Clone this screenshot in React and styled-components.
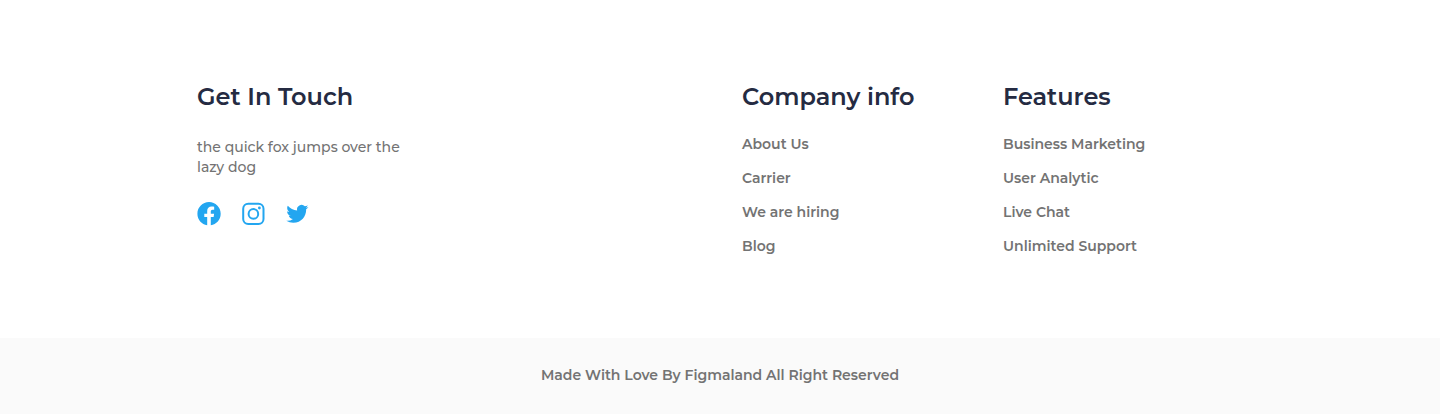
import React from "react";
import styled, { createGlobalStyle } from "styled-components";

const GlobalStyle = createGlobalStyle`
  *, *::before, *::after { box-sizing: border-box; }
  body {
    margin: 0;
    background: #ffffff;
    font-family: Montserrat, Inter, "Open Sans", sans-serif;
  }
`;

const Main = styled.div`
  display: grid;
  grid-template-columns: 545fr 261fr 240fr;
  max-width: 1046px;
  margin: 0 auto;
  padding: 80px 0;

  @media (max-width: 760px) {
    grid-template-columns: 1fr;
    gap: 32px;
    padding: 48px 24px;
  }
`;

const Title = styled.h2`
  margin: 0 0 18px;
  font-size: 24px;
  line-height: 34px;
  font-weight: 600;
  color: #252b42;
`;

const Blurb = styled.p`
  max-width: 220px;
  margin: 0;
  padding: 5px 0 25px;
  font-size: 14px;
  line-height: 20px;
  font-weight: 500;
  color: #737373;
`;

const Socials = styled.div`
  display: flex;
  gap: 20px;
`;

const SocialLink = styled.a`
  display: flex;
  color: #23a6f0;
`;

const Icon = styled.svg`
  width: 24px;
  height: 24px;
  fill: currentColor;
`;

const Links = styled.ul`
  display: grid;
  gap: 10px;
  margin: 0;
  padding: 0;
  list-style: none;
`;

const FooterLink = styled.a`
  display: block;
  font-size: 14px;
  line-height: 24px;
  font-weight: 600;
  color: #737373;
  text-decoration: none;
`;

const Bar = styled.div`
  padding: 25px 24px 27px;
  background: #fafafa;
`;

const Credit = styled.p`
  margin: 0;
  text-align: center;
  font-size: 14px;
  line-height: 24px;
  font-weight: 600;
  color: #737373;
`;

const socials = [
  {
    name: "Facebook",
    shape: (
      <path
        transform="translate(.4 0) scale(.97)"
        d="M24 12c0-6.6-5.4-12-12-12S0 5.4 0 12c0 6 4.400 11 10.100 11.900v-8.400h-3V12h3V9.400c0-3 1.800-4.700 4.500-4.700 1.300 0 2.700.2 2.700.2v3h-1.500c-1.500 0-2 .9-2 1.900V12h3.400l-.5 3.500h-2.900v8.400C19.600 23 24 18 24 12z"
      />
    ),
  },
  {
    name: "Instagram",
    shape: (
      <>
        <rect x="2.2" y="1.7" width="20.3" height="20.3" rx="5" fill="none" stroke="currentColor" strokeWidth="2" />
        <circle cx="12.4" cy="11.9" r="4.8" fill="none" stroke="currentColor" strokeWidth="2" />
        <circle cx="18.4" cy="6" r="1.4" />
      </>
    ),
  },
  {
    name: "Twitter",
    shape: (
      <path
        transform="translate(1.3 .8) scale(.92)"
        d="M23.953 4.570a10 10 0 0 1-2.825.775 4.958 4.958 0 0 0 2.163-2.723c-.951.555-2.005.959-3.127 1.184a4.920 4.920 0 0 0-8.384 4.482C7.690 8.095 4.067 6.130 1.640 3.162a4.822 4.822 0 0 0-.666 2.475c0 1.710.870 3.213 2.188 4.096a4.904 4.904 0 0 1-2.228-.616v.060a4.923 4.923 0 0 0 3.946 4.827 4.996 4.996 0 0 1-2.212.085 4.936 4.936 0 0 0 4.604 3.417 9.867 9.867 0 0 1-6.102 2.105c-.390 0-.779-.023-1.170-.067a13.995 13.995 0 0 0 7.557 2.209c9.053 0 13.998-7.496 13.998-13.985 0-.210 0-.420-.015-.630A9.935 9.935 0 0 0 24 4.590z"
      />
    ),
  },
];

const columns = [
  { title: "Company info", links: ["About Us", "Carrier", "We are hiring", "Blog"] },
  { title: "Features", links: ["Business Marketing", "User Analytic", "Live Chat", "Unlimited Support"] },
];

export default function App() {
  return (
    <footer>
      <GlobalStyle />
      <Main>
        <section>
          <Title>Get In Touch</Title>
          <Blurb>the quick fox jumps over the lazy dog</Blurb>
          <Socials>
            {socials.map((s) => (
              <SocialLink key={s.name} href="#" aria-label={s.name}>
                <Icon viewBox="0 0 24 24" aria-hidden="true">{s.shape}</Icon>
              </SocialLink>
            ))}
          </Socials>
        </section>
        {columns.map((c) => (
          <nav key={c.title} aria-label={c.title}>
            <Title>{c.title}</Title>
            <Links>
              {c.links.map((l) => (
                <li key={l}><FooterLink href="#">{l}</FooterLink></li>
              ))}
            </Links>
          </nav>
        ))}
      </Main>
      <Bar><Credit>Made With Love By Figmaland All Right Reserved</Credit></Bar>
    </footer>
  );
}
